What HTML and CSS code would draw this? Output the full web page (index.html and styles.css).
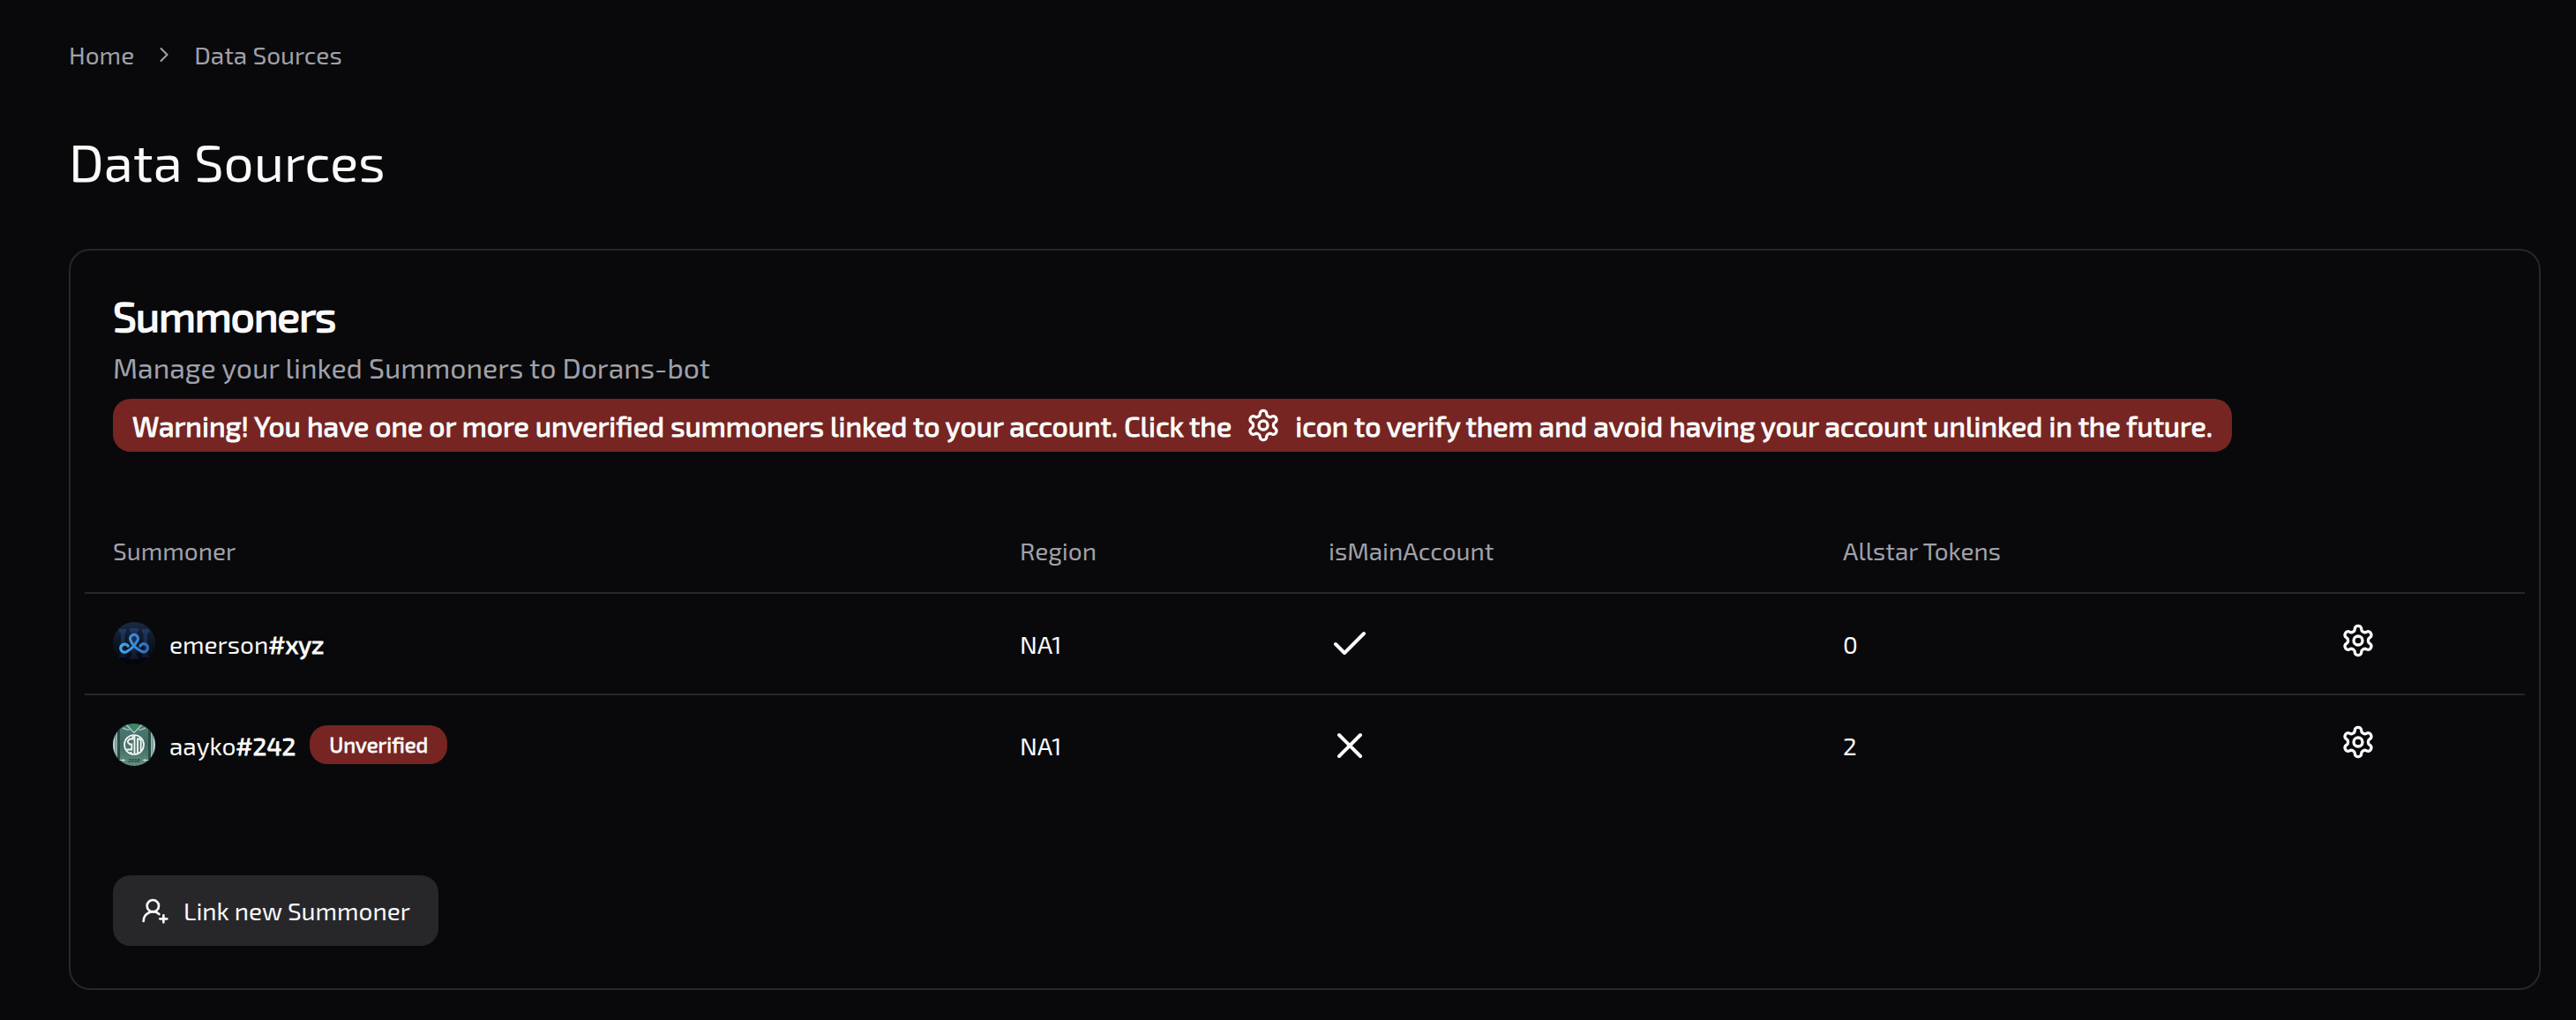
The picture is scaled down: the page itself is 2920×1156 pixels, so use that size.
FILE: index.html
```
<!DOCTYPE html>
<html lang="en">
<head>
<meta charset="utf-8">
<title>Data Sources</title>
<link rel="stylesheet" href="styles.css">
</head>
<body>
<svg class="sprite" aria-hidden="true">
  <symbol id="gear" viewBox="0 0 24 24"><path d="M12.22 2h-.44a2 2 0 0 0-2 2v.18a2 2 0 0 1-1 1.73l-.43.25a2 2 0 0 1-2 0l-.15-.08a2 2 0 0 0-2.73.73l-.22.38a2 2 0 0 0 .73 2.73l.15.1a2 2 0 0 1 1 1.72v.51a2 2 0 0 1-1 1.74l-.15.09a2 2 0 0 0-.73 2.73l.22.38a2 2 0 0 0 2.73.73l.15-.08a2 2 0 0 1 2 0l.43.25a2 2 0 0 1 1 1.73V20a2 2 0 0 0 2 2h.44a2 2 0 0 0 2-2v-.18a2 2 0 0 1 1-1.73l.43-.25a2 2 0 0 1 2 0l.15.08a2 2 0 0 0 2.73-.73l.22-.39a2 2 0 0 0-.73-2.73l-.15-.08a2 2 0 0 1-1-1.74v-.5a2 2 0 0 1 1-1.74l.15-.09a2 2 0 0 0 .73-2.73l-.22-.38a2 2 0 0 0-2.73-.73l-.15.08a2 2 0 0 1-2 0l-.43-.25a2 2 0 0 1-1-1.73V4a2 2 0 0 0-2-2z"/><circle cx="12" cy="12" r="3"/></symbol>
</svg>
<main class="page">
  <nav class="crumbs">
    <span>Home</span>
    <svg class="icon crumb-sep" viewBox="0 0 24 24"><path d="m9 18 6-6-6-6"/></svg>
    <span>Data Sources</span>
  </nav>
  <h1 class="title">Data Sources</h1>
  <section class="card">
    <header class="card-head">
      <h2 class="card-title strong">Summoners</h2>
      <p class="card-desc">Manage your linked Summoners to Dorans-bot</p>
      <div class="alert strong">
        <span>Warning! You have one or more unverified summoners linked to your account. Click the</span>
        <svg class="icon gear"><use href="#gear"/></svg>
        <span>icon to verify them and avoid having your account unlinked in the future.</span>
      </div>
    </header>
    <div class="table">
      <div class="row head">
        <div>Summoner</div><div>Region</div><div>isMainAccount</div><div>Allstar Tokens</div><div></div>
      </div>
      <div class="row">
        <div class="who">
          <svg class="avatar" viewBox="0 0 48 48">
            <defs>
              <linearGradient id="night" x1="0" y1="0" x2="0" y2="1"><stop offset="0" stop-color="#1b2a42"/><stop offset=".45" stop-color="#0d1827"/><stop offset="1" stop-color="#020307"/></linearGradient>
              <linearGradient id="cloud" x1="0" y1="0" x2="1" y2="0"><stop offset="0" stop-color="#45a6ea"/><stop offset="1" stop-color="#2f6dba"/></linearGradient>
              <linearGradient id="pillar" x1="0" y1="0" x2="0" y2="1"><stop offset="0" stop-color="#203a63"/><stop offset="1" stop-color="#0e1729"/></linearGradient>
            </defs>
            <circle cx="24" cy="24" r="24" fill="url(#night)"/>
            <g fill="url(#pillar)">
              <path d="M7 8h8v3l-1.500 2v21l2 3v3H6l3-4V13l-2-2z"/>
              <path d="M19 7h10v3l-2 2v26l2 2v2H19v-2l2-2V12l-2-2z"/>
              <path d="M33 8h8v3l-2 2v23l3 4h-9.500v-3l2-3V13L33 11z"/>
            </g>
            <path fill="none" stroke="url(#cloud)" stroke-width="3.200" stroke-linecap="round" d="M17.200 27.200A4.600 4.600 0 1 0 16.200 33.200C20 31 24 27.500 27.200 22A4.500 4.500 0 1 0 20 20.800C22 26 27 30.500 32.500 33.200A4.600 4.600 0 1 0 30.800 27.200"/>
          </svg>
          <span>emerson<b class="strong">#xyz</b></span>
        </div>
        <div>NA1</div>
        <div><svg class="icon mark" viewBox="0 0 24 24"><path d="M20 6 9 17l-5-5"/></svg></div>
        <div>0</div>
        <div><svg class="icon gear row-gear"><use href="#gear"/></svg></div>
      </div>
      <div class="row">
        <div class="who">
          <svg class="avatar" viewBox="0 0 48 48">
            <defs><clipPath id="round"><circle cx="24" cy="24" r="24"/></clipPath>
            <linearGradient id="jade" x1="0" y1="0" x2="0" y2="1"><stop offset="0" stop-color="#4d7f78"/><stop offset=".5" stop-color="#41695f"/><stop offset="1" stop-color="#628f84"/></linearGradient></defs>
            <g clip-path="url(#round)">
              <rect width="48" height="48" fill="url(#jade)"/>
              <path fill="#2b4a47" d="M5 0h3v48H5zM40 0h3v48h-3z"/>
              <path fill="#b9d6d3" d="M0 8h2.500v32H0zM3.500 6h1.200v35H3.500zM45.500 8H48v32h-2.500zM43.300 6h1.200v35h-1.200z"/>
              <path fill="none" stroke="#bfd8d5" stroke-width="1.100" d="m14 0 10 10.500L34 0M11 5l5 2 3 0M37 5l-5 2-3 0"/>
              <path fill="#2f9350" d="m20 3 2-1.500h4L28 3l-4 4z"/>
              <circle cx="24" cy="24" r="11" fill="#4c766d" stroke="#f4f8f7" stroke-width="1.700"/>
              <g fill="none" stroke="#f4f8f7" stroke-width="1.800">
                <path d="M22.500 14v3.500h-3.500L17 19.500v2l2 2h2.300v6H15.500M24.500 14v21M28 34V17.500h2.500l1.200 2V31M20.500 35v-3"/>
              </g>
              <path fill="none" stroke="#cfe0dd" stroke-width=".9" d="M6 41.500h8M34 41.500h8"/>
              <path fill="#cfe0dd" d="m11 40 3 1.500-3 1.500zM37 40l-3 1.500 3 1.500z"/>
              <text class="year" x="24" y="44" text-anchor="middle">2018</text>
            </g>
          </svg>
          <span>aayko<b class="strong">#242</b></span>
          <span class="badge strong">Unverified</span>
        </div>
        <div>NA1</div>
        <div><svg class="icon mark" viewBox="0 0 24 24"><path d="M18 6 6 18M6 6l12 12"/></svg></div>
        <div>2</div>
        <div><svg class="icon gear row-gear"><use href="#gear"/></svg></div>
      </div>
    </div>
    <button class="link-btn" type="button">
      <svg class="icon add" viewBox="0 0 24 24"><path d="M2 21a8 8 0 0 1 13.292-6"/><circle cx="10" cy="8" r="5"/><path d="M19 16v6M22 19h-6"/></svg>
      <span>Link new Summoner</span>
    </button>
  </section>
</main>
</body>
</html>
```
FILE: styles.css
```
* { box-sizing: border-box; margin: 0; }
html { background: #09090b; }
body {
  background: #09090b;
  color: #fafafa;
  font-family: "Exo 2", Roboto, sans-serif;
  font-size: 28px;
  line-height: 40px;
}
.sprite { position: absolute; width: 0; height: 0; }
/* Emboldened without changing the regular advance widths. */
.strong { font-weight: 400; -webkit-text-stroke: .034em currentColor; }
.icon {
  display: block;
  flex: none;
  fill: none;
  stroke: currentColor;
  stroke-width: 2;
  stroke-linecap: round;
  stroke-linejoin: round;
}
.page { padding: 42px 40px 34px 78px; }
.crumbs { display: flex; align-items: center; color: #a1a1aa; }
.crumb-sep { width: 28px; height: 28px; margin: 0 20px; stroke-width: 1.8; }
.title { margin-top: 64px; font-size: 60px; line-height: 72px; font-weight: 400; }
.card {
  margin-top: 64px;
  height: 840px;
  border: 2px solid #27272a;
  border-radius: 24px;
  padding: 49px 16px 46px;
}
.card-head { padding: 0 32px; }
.card-title { font-size: 48px; line-height: 48px; letter-spacing: -1.2px; }
.card-desc { margin-top: 11px; font-size: 32px; line-height: 48px; color: #a1a1aa; }
.alert {
  display: flex;
  align-items: center;
  justify-content: space-between;
  width: 2402px;
  height: 60px;
  margin-top: 12px;
  padding: 0 22px;
  border-radius: 20px;
  background: #762522;
  font-size: 32px;
  white-space: nowrap;
}
.gear { width: 40px; height: 40px; }
.table { margin-top: 65px; }
.row {
  display: grid;
  grid-template-columns: 1028px 350px 583px 564px 1fr;
  align-items: center;
  height: 115px;
  padding: 1px 0 0 32px;
}
.row + .row { border-top: 2px solid #27272a; }
.row.head { height: 94px; padding-top: 0; color: #a1a1aa; }
.who { display: flex; align-items: center; }
.avatar { display: block; width: 48px; height: 48px; margin: -2px 16px 0 0; }
.year { font: italic 700 6px "Liberation Sans", sans-serif; fill: #24403b; }
.badge {
  height: 44px;
  margin: -2px 0 0 16px;
  padding: 0 22px;
  border-radius: 20px;
  background: #762522;
  font-size: 24px;
  line-height: 44px;
}
.mark { width: 48px; height: 48px; }
.row-gear { margin-bottom: 9px; }
.link-btn {
  display: flex;
  align-items: center;
  gap: 16px;
  width: 369px;
  height: 80px;
  margin: 91px 0 0 32px;
  padding: 0 32px;
  border: 0;
  border-radius: 20px;
  background: #27272a;
  color: inherit;
  font: inherit;
  white-space: nowrap;
}
.add { width: 32px; height: 32px; }
```
